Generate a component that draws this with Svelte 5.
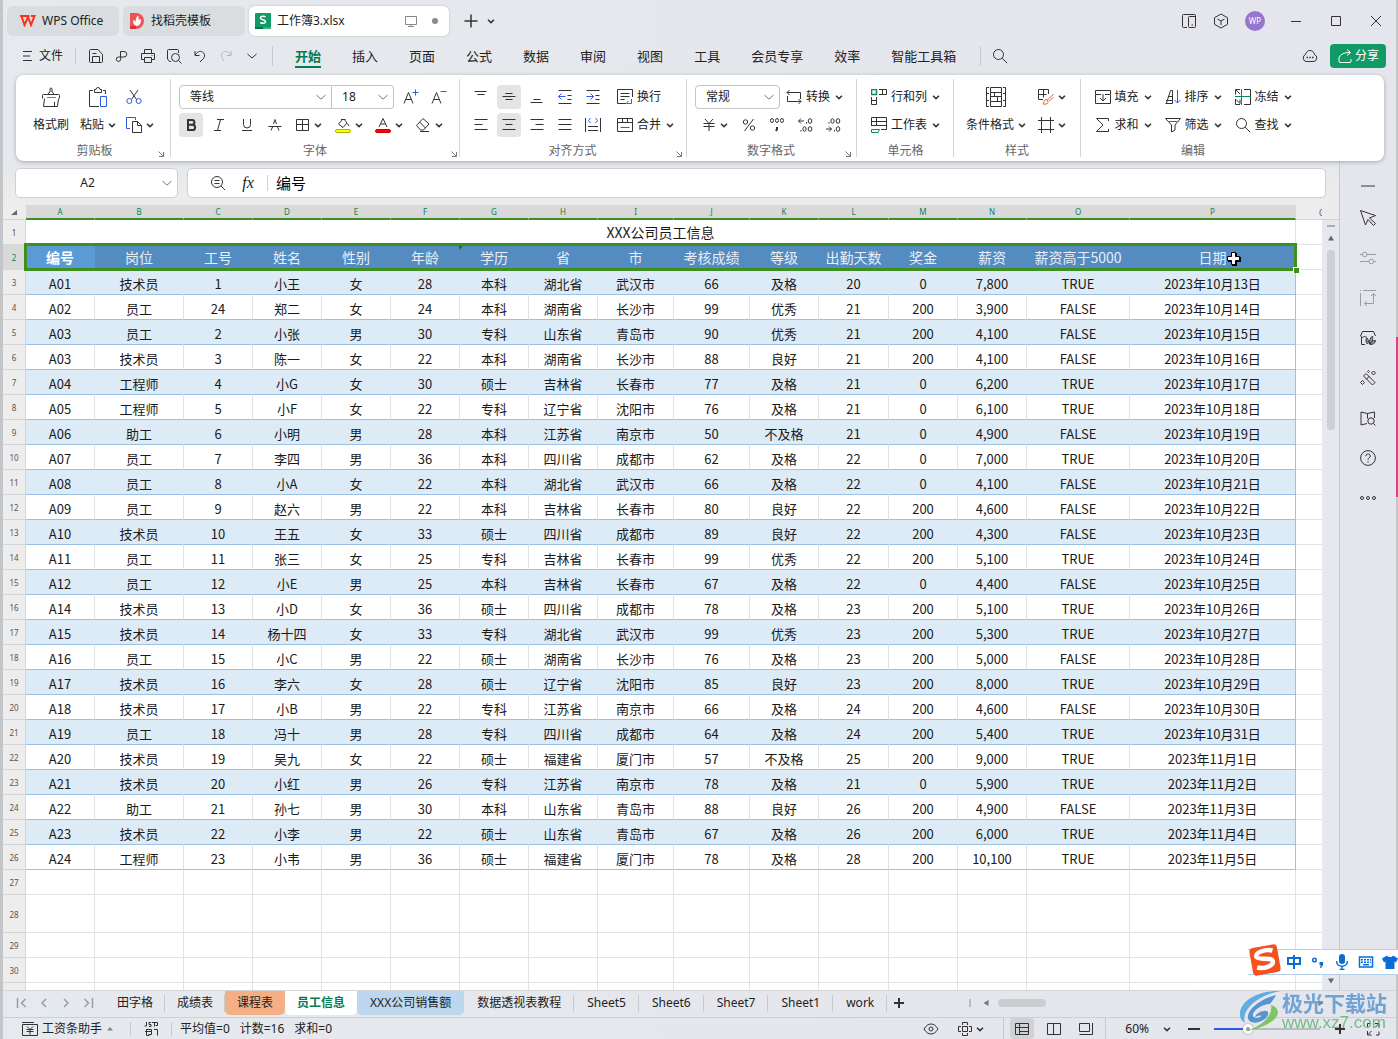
<script>
  const icons = {
    chev: [8, '<path d="M1 2.800 4 5.600 7 2.800" stroke-width="1.500"/>'],
    chevWide: [12, '<path d="M1.500 4 6 8.200 10.500 4" stroke="#777"/>'],
    menu: [12, '<path d="M2 1.500h9M2 6h7M2 10.500h9"/>'],
    save: [16, '<path d="M1.500 2.500v11a1 1 0 0 0 1 1h11a1 1 0 0 0 1-1V6.500l-4.500-5H2.500a1 1 0 0 0-1 1zM4.500 14v-5.500h7V14M4.500 5.500h4"/>'],
    link: [14, '<path d="M5.500 8V2.500h3.500a2.600 2.600 0 0 1 0 5.500H3.500a2.200 2.200 0 1 0 2.200 2.300V8"/>'],
    print: [16, '<path d="M4.500 5V1.500h7V5M4 11.500H1.500v-6h13v6H12M4.500 9.500h7v5h-7zM11.500 7.500h1"/>'],
    preview: [16, '<path d="M5 13.500H3.500L1.500 11V2.500a1 1 0 0 1 1-1h9a1 1 0 0 1 1 1V5"/><circle cx="9.500" cy="9.500" r="4"/><path d="m12.500 12.500 3 3"/>'],
    undo: [14, '<path d="M2 2v4.500h4.500M2.200 6C4 3 7 1.500 9.500 3s2.500 4.500 1 6.500L7 13"/>'],
    redo: [14, '<path d="M12 2v4.500H7.500M11.800 6C10 3 7 1.500 4.500 3S2 7.500 3.500 9.500L5 12" stroke="#b4b8bd"/>'],
    more: [12, '<path d="M1.500 4 6 8l4.500-4"/>'],
    search: [16, '<circle cx="6.500" cy="6.500" r="5"/><path d="m10.200 10.200 5 5"/>'],
    cloud: [16, '<path d="M4 13.500a3.700 3.700 0 0 1-.5-7C4 4 5.800 2.500 8 2.500s4 1.500 4.500 4a3.700 3.700 0 0 1-.5 7z"/><path d="M4.500 9.500H6M7.300 9.500h1.500M10 9.500h1.500" stroke-width="1.600"/>'],
    share: [16, '<path d="M2 9v4.500a1 1 0 0 0 1 1h10a1 1 0 0 0 1-1V11M2.500 9C4 6 7 4.500 13 4.500M10 1.500l3.500 3-3.500 3" stroke="#fff"/>'],
    split: [16, '<path d="M6 14.500H2.500a1 1 0 0 1-1-1v-11a1 1 0 0 1 1-1h11a1 1 0 0 1 1 1v11a1 1 0 0 1-1 1h-5a1 1 0 0 1-1-1v-9a1 1 0 0 1 1-1H14M10.500 12h1.500"/>'],
    cube: [16, '<path d="m8 1 6.500 3.700v6.600L8 15l-6.500-3.700V4.700zM4.500 6 8 8l3.500-2M8 8v4"/>'],
    min: [12, '<path d="M1 6.500h10"/>'],
    max: [12, '<path d="M1.500 1.500h9v9h-9z"/>'],
    close: [12, '<path d="m1 1 10 10M11 1 1 11"/>'],
    plus: [14, '<path d="M7 .500v13M.500 7h13" stroke-width="1.500"/>'],
    screen: [14, '<path d="M1.500 2.500h11v8h-11zM4 12.500h6M7 10.500v2" stroke="#888"/>'],
    brush: [20, '<path d="M7.500 7.500V6L9 5V2a1 1 0 0 1 2 0v3l1.500 1V7.500M1.500 11.500v-3a1 1 0 0 1 1-1h15a1 1 0 0 1 1 1v3M3.500 11.500l-1 8h14l1-8M13.500 15v4"/><path d="M6 10.500h9" stroke="#d8622a"/>'],
    paste: [20, '<path d="M5 3.500H1.500v16H11M15 3.500h2.500V7"/><path d="M6.500 5.500v-3H8a2 2 0 0 1 4 0h1.500v3z"/><path d="M12.500 9.500h6v10h-6z" stroke="#2c5be0"/>'],
    cut: [16, '<path d="m4 1 6.500 9.500M12 1 5.500 10.500"/><circle cx="3.300" cy="12" r="2.500" stroke="#2c5be0"/><circle cx="12.700" cy="12" r="2.500" stroke="#2c5be0"/>'],
    copy: [16, '<path d="M4 11.500H.500v-11h9V3" stroke="#2c5be0"/><path d="M6.500 4.500h5l4 4v7h-9zM11.500 4.500v4h4"/>'],
    bold: [14, '<path d="M4 2h4a2.300 2.300 0 0 1 0 4.800H4zM4 6.800h4.500a2.500 2.500 0 0 1 0 5.200H4z" stroke-width="2"/>'],
    italic: [14, '<path d="M5 1.500h7M2 12.500h7M8.500 1.500l-3 11"/>'],
    under: [14, '<path d="M3.500 1v5.500a3.500 3.500 0 0 0 7 0V1M2 12.500h10"/>'],
    strike: [14, '<path d="M3 12.500 4.500 9M5.500 6 7 1.500 8.500 6M9.500 9l1.500 3.500M.500 8.500h13"/>'],
    border: [14, '<path d="M.500 1.500h12v11h-12zM6.500 1.500v11M.500 6.500h12"/>'],
    fill: [16, '<path d="M6 2.500h4.500M8 2 3.500 7 8 10.500l4-4.500L9 2M12.500 6.500 14 9"/><rect x=".500" y="12.500" width="15" height="3" rx="1.500" fill="#ff0" stroke="#b5b500"/>'],
    color: [16, '<path d="M4 10 8 1.500 12 10M5.500 7h5"/><rect x=".500" y="12.500" width="15" height="3" rx="1.500" fill="#f00" stroke="#c00"/>'],
    eraser: [16, '<path d="m1.500 8.500 6.500-7 6 5.500-5.500 6H5.500zM4.500 5l6 6M5 14.500h9"/>'],
    grow: [18, '<path d="m2 15.500 4.500-11 4.500 11M3.500 11.500h6"/><path d="M13.500 1.500v6M10.500 4.500h6" stroke="#2c5be0"/>'],
    shrink: [18, '<path d="m2 15.500 4.500-11 4.500 11M3.500 11.500h6"/><path d="M10.500 3.500h6" stroke="#2c5be0"/>'],
    vtop: [14, '<path d="M.500 1.500h12M3.500 4.500h7"/>'],
    vmid: [14, '<path d="M3.500 3.500h7M.500 6.500h13M3.500 9.500h7"/>'],
    vbot: [14, '<path d="M3.500 9.500h7M.500 12.500h12"/>'],
    outdent: [14, '<path d="M.500.500h13M.500 13.500h13M9.500 5.500h4M9.500 9.500h4"/><path d="M7.500 6.500H.500M3.500 3.500l-3 3 3 3" stroke="#2c5be0"/>'],
    indent: [14, '<path d="M.500.500h13M.500 13.500h13M9.500 5.500h4M9.500 9.500h4"/><path d="M.500 6.500h7M4.500 3.500l3 3-3 3" stroke="#2c5be0"/>'],
    wrap: [16, '<path d="M9 14.500H.500v-14h15V8M3.500 4.500h9M3.500 7.500h9M3.500 10.500h4"/><path d="M14.500 10v4.500H9.500M11.500 12l-2.500 2.500" stroke="#0a8a5c"/>'],
    left: [14, '<path d="M.500 1.500h13M.500 6.500h8M.500 11.500h13"/>'],
    center: [14, '<path d="M.500 1.500h13M3.500 6.500h7M.500 11.500h13"/>'],
    right: [14, '<path d="M.500 1.500h13M5.500 6.500h8M.500 11.500h13"/>'],
    justify: [14, '<path d="M.500 1.500h13M.500 6.500h13M.500 11.500h13"/>'],
    spread: [16, '<path d="M.500 1v14M15.500 1v14M3 9.500h10M3 13.500h10"/><path d="M5.500 1 3.500 3.500l2 2.500M10.500 1l2 2.500-2 2.500" stroke="#2c5be0"/>'],
    merge: [16, '<path d="M.500 1.500h15v13h-15zM.500 5.500h15M5.500 1.500v4M10.500 1.500v4"/><path d="M3.500 10.500h9" stroke="#0a8a5c"/>'],
    convert: [16, '<path d="M3.500 1 1 3.500 3.500 6M1 3.500h13.500V10M1.500 7v5.500H15M12.500 10l2.500 2.500-2.500 2.500"/>'],
    yen: [14, '<path d="M3 1l4 4.500L11 1M1.500 5.500h11M1.500 8.500h11M7 5.500V13"/>'],
    percent: [14, '<path d="M11.500 1 2.500 13"/><circle cx="3.500" cy="4" r="2.200"/><circle cx="10.500" cy="10" r="2.200"/>'],
    comma: [16, '<ellipse cx="3" cy="3.500" rx="1.500" ry="2"/><ellipse cx="8" cy="3.500" rx="1.500" ry="2"/><ellipse cx="13" cy="3.500" rx="1.500" ry="2"/><path d="M8 10v2L7 14" stroke-width="2"/>'],
    addDec: [16, '<path d="M7 4H1.500M4 1.500 1.500 4 4 6.500M9.500 5v1.500M4 13v1.500"/><ellipse cx="13" cy="4" rx="1.800" ry="2.300"/><ellipse cx="7.500" cy="12" rx="1.600" ry="2.300"/><ellipse cx="13" cy="12" rx="1.800" ry="2.300"/>'],
    subDec: [16, '<path d="M1 12h5.500M4 9.500 6.500 12 4 14.500M9.500 13v1.500M4 5v1.500"/><ellipse cx="13" cy="12" rx="1.800" ry="2.300"/><ellipse cx="7.500" cy="4" rx="1.600" ry="2.300"/><ellipse cx="13" cy="4" rx="1.800" ry="2.300"/>'],
    rowcol: [16, '<path d="M.500.500h5v5h-5z" stroke="#0a8a5c" stroke-width="1.500"/><path d="M8 .500h7.500v5H8M11.500.500v5M.500 8v7.500h5V8M.500 11.500h5"/>'],
    sheet: [16, '<path d="M.500 9V.500h15v12H10M.500 4.500h15M5.500.500v8M.500 8.500h15"/><path d="M.500 12.500h8l-1.500 3H.500z" stroke="#0a8a5c"/>'],
    cond: [20, '<path d="M3 .500H.500v19H3M17 .500h2.500v19H17M.500 6.500H3M.500 13.500H3M17 6.500h2.500M17 13.500h2.500M4.500 .500h11v5h-11zM4.500 5.500v9M15.500 5.500v9M8.500 5.500v4M4.500 9.500h11M11.500 9.500v5M4.500 14.500h11v5h-11z"/>'],
    style: [16, '<path d="M5 10.500H.500v-10h10V5M.500 5.500h8M5.500.500v8"/><path d="m15.500 5-6 6M15.500 8l-4 4M8 10.500a2.500 2.500 0 0 1 2 3c-.5 1.500-3 2-5 1.500 1.500-1.500.5-4 3-4.500z" stroke="#d8622a"/>'],
    frame: [16, '<path d="M3.500 0v16M12.500 0v16M0 3.500h16M0 12.500h16"/>'],
    filldown: [16, '<path d="M6 5.500H.500v-4h15v4H10M.500 6v8.500h15V6M8 5v7M5 9l3 3 3-3"/>'],
    sort: [16, '<path d="M1 11.500h6M.500 14.500h7V1.500H5.500L1.500 14M3 7.500h4"/><path d="M12.500 1v13M9.500 11l3 3 3-3" stroke="#2c5be0"/>'],
    freeze: [16, '<path d="M5 .500H.500v5M.500 10v5.500H5M9 .500h6.500v15H9M1 1l4 4M1 10.500l4 4M5 10.500v4"/><path d="M6.500 0v16M0 7.500h16" stroke="#0a8a5c"/>'],
    sum: [16, '<path d="M13.500 4V1.500h-12L8 8l-6.500 6.500h12V12"/>'],
    filter: [16, '<path d="M.500 1.500h15L10 8v5l-3.500 2V8z"/><path d="M4 4.500h8" stroke="#0a8a5c"/>'],
    launch: [6, '<path d="M.500.500 5 5M5.500 1v4.500H1" stroke="#777"/>'],
    zoomout: [16, '<circle cx="7" cy="7" r="5.500"/><path d="m11 11 4 4M4.500 5.500h5M4.500 8.500h5"/>'],
    bar: [14, '<path d="M0 7h14" stroke="#8a8d92" stroke-width="2"/>'],
    arrow: [18, '<path d="m1.500 1.500 15 5-6 2.500 6 5.500-2 2-5.500-6L6.500 16z"/>'],
    sliders: [16, '<path d="M0 4.500h2.500M7 4.500h9M0 11.500h9M13.500 11.500H16" stroke="#9a9da2"/><circle cx="4.700" cy="4.500" r="2.300" stroke="#9a9da2"/><circle cx="11.300" cy="11.500" r="2.300" stroke="#9a9da2"/>'],
    swap: [16, '<path d="M.500 3v13M3 .500h13M0 .500h1M4.500 13.500h9v-10M11 6l2.500-2.500L16 6M7 11l-2.500 2.500L7 16" stroke="#9a9da2"/>'],
    gallery: [16, '<path d="M5 14.500H1.500V7M.500 6l2-4.500h11l2 4.500M.500 6c1.500 2 3.500 1.500 4 0 .5 1 1.500 1.500 2.500 1"/><path d="M7.500 14c-2-2-2-4-.5-6 1.500 2 2 4 .5 6zM9.500 14c-.5-4 1-6 3-8 .5 4 0 6-3 8zM10 14.500c0-2 2.500-4 5.500-4 0 3-3 4-5.500 4z" fill="#9aa0a6"/>'],
    wand: [16, '<path d="m6 3.500 9 9-2.500 2.500-9-9zM6 9.500 9.500 6M.500 12.500l2-2 2 2-2 2zM11.500 3l2-2 2 2-2 2zM7.500 1.500l1-1 1 1-1 1z"/>'],
    book: [16, '<path d="M7 13.500 1 15V2l6.500 1.500v5M7.500 3.500 14.500 2v6"/><circle cx="11" cy="11" r="3.200"/><path d="m13.500 13.500 2 2"/>'],
    help: [16, '<circle cx="8" cy="8" r="7.400"/><path d="M5.800 6.200c0-3 4.500-3 4.500-.2C10.300 7.800 8 7.700 8 9.800M8 11.200v1.300"/>'],
    dots: [16, '<circle cx="2" cy="8" r="1.500"/><circle cx="8" cy="8" r="1.500"/><circle cx="14" cy="8" r="1.500"/>'],
    first: [12, '<path d="M1.500 1v10M9.500 2 5.500 6l4 4" stroke="#9a9da2" stroke-width="1.500"/>'],
    prev: [12, '<path d="M8 2 4 6l4 4" stroke="#9a9da2" stroke-width="1.500"/>'],
    next: [12, '<path d="m4 2 4 4-4 4" stroke="#9a9da2" stroke-width="1.500"/>'],
    last: [12, '<path d="M10.500 1v10M2.500 2l4 4-4 4" stroke="#9a9da2" stroke-width="1.500"/>'],
    add: [12, '<path d="M6 1v10M1 6h10" stroke-width="2"/>'],
    salary: [16, '<path d="M0 1.500h12M.500 3.500h15v11h-15zM5 5.500l3 3 3-3M4.500 8.500h7M4.500 10.500h7M8 8.500v5"/>'],
    up: [8, '<path d="M1 5.500 4 2l3 3.500z" fill="#7c8296" stroke="none"/>'],
    flow: [16, '<path d="M3.500 1v4H1.500M8 1.500H6v2h2v2H6M9 1.500h5.500M11.500 1.500v4M14.500 1.500v3h-2M3 8.500h5.500v5H5.500M2 10.500h6.500M3.500 8v6.500h3M11 8.500h3.500v6"/>'],
    eye: [16, '<path d="M1 8c2-3.500 4.500-5 7-5s5 1.500 7 5c-2 3.500-4.500 5-7 5s-5-1.500-7-5z"/><circle cx="8" cy="8" r="2"/>'],
    cross: [14, '<path d="M4.500 4.500h5v5h-5zM4.500 3V.500h5V3M4.500 11v2.500h5V11M3 4.500H.500v5H3M11 4.500h2.500v5H11"/>'],
    viewGrid: [14, '<path d="M.500 1.500h13v11h-13zM.500 5.500h13M4.500 1.500v11M4.500 9.500h9"/>'],
    viewPage: [14, '<path d="M.500 1.500h13v11h-13zM6.500 1.500v11"/>'],
    viewBreak: [14, '<path d="M.500 1.500h10v8h-10zM13.500 1v11.500H.500M4.500 12.500h3"/>'],
    minus: [12, '<path d="M0 6h12" stroke-width="2"/>'],
    full: [14, '<path d="M9 1.500h4v4M12.500 2 9 5.500M1.500 9v4h4M2 12.500 5.500 9M1.500 5V1.500H4M13 9.500V13h-3"/>'],
  }

  const menus = ['开始', '插入', '页面', '公式', '数据', '审阅', '视图', '工具', '会员专享', '效率', '智能工具箱']
  const sideTools = [
    ['bar', '收起'], ['arrow', '选择'], ['sliders', '属性'], ['swap', '切换'], ['gallery', '素材'],
    ['wand', '美化'], ['book', '查阅'], ['help', '帮助'], ['dots', '更多'],
  ]

  const cols = [
    ['A', 69], ['B', 89], ['C', 69], ['D', 69], ['E', 69], ['F', 69], ['G', 69], ['H', 69], ['I', 76],
    ['J', 76], ['K', 69], ['L', 70], ['M', 69], ['N', 69], ['O', 103], ['P', 166], ['Q', 53],
  ]
  const dataWidth = cols.slice(0, 16).reduce((sum, c) => sum + c[1], 0)

  const heads = ['编号', '岗位', '工号', '姓名', '性别', '年龄', '学历', '省', '市', '考核成绩', '等级', '出勤天数', '奖金', '薪资', '薪资高于5000', '日期']
  const rows = `A01 技术员 1 小王 女 28 本科 湖北省 武汉市 66 及格 20 0 7,800 TRUE 2023年10月13日
A02 员工 24 郑二 女 24 本科 湖南省 长沙市 99 优秀 21 200 3,900 FALSE 2023年10月14日
A03 员工 2 小张 男 30 专科 山东省 青岛市 90 优秀 21 200 4,100 FALSE 2023年10月15日
A03 技术员 3 陈一 女 22 本科 湖南省 长沙市 88 良好 21 200 4,100 FALSE 2023年10月16日
A04 工程师 4 小G 女 30 硕士 吉林省 长春市 77 及格 21 0 6,200 TRUE 2023年10月17日
A05 工程师 5 小F 女 22 专科 辽宁省 沈阳市 76 及格 21 0 6,100 TRUE 2023年10月18日
A06 助工 6 小明 男 28 本科 江苏省 南京市 50 不及格 21 0 4,900 FALSE 2023年10月19日
A07 员工 7 李四 男 36 本科 四川省 成都市 62 及格 22 0 7,000 TRUE 2023年10月20日
A08 员工 8 小A 女 22 本科 湖北省 武汉市 66 及格 22 0 4,100 FALSE 2023年10月21日
A09 员工 9 赵六 男 22 本科 吉林省 长春市 80 良好 22 200 4,600 FALSE 2023年10月22日
A10 技术员 10 王五 女 33 硕士 四川省 成都市 89 良好 22 200 4,300 FALSE 2023年10月23日
A11 员工 11 张三 女 25 专科 吉林省 长春市 99 优秀 22 200 5,100 TRUE 2023年10月24日
A12 员工 12 小E 男 25 本科 吉林省 长春市 67 及格 22 0 4,400 FALSE 2023年10月25日
A14 技术员 13 小D 女 36 硕士 四川省 成都市 78 及格 23 200 5,100 TRUE 2023年10月26日
A15 技术员 14 杨十四 女 33 专科 湖北省 武汉市 99 优秀 23 200 5,300 TRUE 2023年10月27日
A16 员工 15 小C 男 22 硕士 湖南省 长沙市 76 及格 23 200 5,000 FALSE 2023年10月28日
A17 技术员 16 李六 女 28 硕士 辽宁省 沈阳市 85 良好 23 200 8,000 TRUE 2023年10月29日
A18 技术员 17 小B 男 22 专科 江苏省 南京市 66 及格 24 200 4,600 FALSE 2023年10月30日
A19 员工 18 冯十 男 28 专科 四川省 成都市 64 及格 24 200 5,400 TRUE 2023年10月31日
A20 技术员 19 吴九 女 22 硕士 福建省 厦门市 57 不及格 25 200 9,000 TRUE 2023年11月1日
A21 技术员 20 小红 男 26 专科 江苏省 南京市 78 及格 21 0 5,900 TRUE 2023年11月2日
A22 助工 21 孙七 男 30 本科 山东省 青岛市 88 良好 26 200 4,900 FALSE 2023年11月3日
A23 技术员 22 小李 男 22 硕士 山东省 青岛市 67 及格 26 200 6,000 TRUE 2023年11月4日
A24 工程师 23 小韦 男 36 硕士 福建省 厦门市 78 及格 28 200 10,100 TRUE 2023年11月5日`.split('\n').map((line) => line.split(' '))

  const sheets = [
    ['田字格', ''], ['成绩表', ''], ['课程表', 'orange'], ['员工信息', 'current'], ['XXX公司销售额', 'blue'],
    ['数据透视表教程', 'wide'], ['Sheet5', 'wide'], ['Sheet6', 'wide'], ['Sheet7', 'wide'], ['Sheet1', 'wide'], ['work', 'wide'],
  ]

  let formula = '编号'
  let zoom = 30
</script>

{#snippet icon(name)}
  <svg class="ico" width={icons[name][0]} height={icons[name][0]} viewBox="0 0 {icons[name][0]} {icons[name][0]}" aria-hidden="true">{@html icons[name][1]}</svg>
{/snippet}

{#snippet tool(name, label, on = false)}
  <button class="tool" class:on aria-label={label}>{@render icon(name)}</button>
{/snippet}

{#snippet drop(name, label)}
  <button class="drop" aria-label={label}>{@render icon(name)}{@render icon('chev')}</button>
{/snippet}

{#snippet item(name, label, more = true)}
  <button class="item">{@render icon(name)}<span>{label}</span>{#if more}{@render icon('chev')}{/if}</button>
{/snippet}

{#snippet foot(label, launch = false)}
  <div class="foot">
    <span>{label}</span>
    {#if launch}<button class="launch" aria-label="{label}设置">{@render icon('launch')}</button>{/if}
  </div>
{/snippet}

<div class="window">
  <header class="title">
    <button class="doc home">
      <svg width="16" height="12" viewBox="0 0 16 12" aria-hidden="true"><path d="M0 1h9.500M1.500 1l3 9L8 2l3 8 3.500-9H11" fill="none" stroke="#f5341f" stroke-width="2" /></svg>
      WPS Office
    </button>
    <button class="doc tmpl">
      <svg width="16" height="16" viewBox="0 0 16 16" aria-hidden="true"><path d="M1 0h6a8 8 0 0 1 0 16H1z" fill="#f0525a" /><path d="M1 13h6v3H1z" fill="#d8323c" /><path d="M8 13C4 12 4 9 4.500 7c1 .5 1.800 1 2 2C6.500 6 7.500 4 9 2.500c1 2 .8 3.500.5 5 .5-.8 1.500-1.200 2.500-1.500 0 4-1 6.500-4 7z" fill="#fff" /></svg>
      找稻壳模板
    </button>
    <button class="doc active">
      <svg width="16" height="16" viewBox="0 0 16 16" aria-hidden="true"><rect width="16" height="16" rx="1" fill="#109b66" /><path d="M0 14h8v2H0z" fill="#067046" /><path d="M8 14h8v2H8z" fill="#35b183" /><path d="M10.500 4C9 2.800 5.500 2.800 5.500 5c0 2.300 5 1.200 5 3.600 0 2-3.500 2.200-5.200.7" fill="none" stroke="#fff" stroke-width="1.600" /></svg>
      <span class="name">工作簿3.xlsx</span>
      {@render icon('screen')}
      <i class="dirty"></i>
    </button>
    <button class="tool" aria-label="新建">{@render icon('plus')}</button>
    <button class="slim" aria-label="标签列表">{@render icon('chev')}</button>
    <div class="controls">
      <button class="ctl" aria-label="分屏">{@render icon('split')}</button>
      <button class="ctl" aria-label="应用">{@render icon('cube')}</button>
      <button class="avatar">WP</button>
      <button class="win" aria-label="最小化">{@render icon('min')}</button>
      <button class="win" aria-label="最大化">{@render icon('max')}</button>
      <button class="win" aria-label="关闭">{@render icon('close')}</button>
    </div>
  </header>

  <nav class="menu">
    <button class="file">{@render icon('menu')}文件</button>
    <div class="quick">
      {#each [['save', '保存'], ['link', '输出'], ['print', '打印'], ['preview', '打印预览'], ['undo', '撤销'], ['redo', '恢复'], ['more', '更多']] as q}
        <button aria-label={q[1]}>{@render icon(q[0])}</button>
      {/each}
    </div>
    <div class="tabs">
      {#each menus as m, i}
        <button class:cur={i == 0}>{m}</button>
      {/each}
    </div>
    <button class="find" aria-label="搜索">{@render icon('search')}</button>
    <button class="cloud" aria-label="云同步">{@render icon('cloud')}</button>
    <button class="share">{@render icon('share')}分享</button>
  </nav>

  <section class="ribbon">
    <div class="group clip">
      <div class="line">
        <button class="big">{@render icon('brush')}<span>格式刷</span></button>
        <button class="big">{@render icon('paste')}<span>粘贴{@render icon('chev')}</span></button>
        <div class="stack">
          {@render tool('cut', '剪切')}
          {@render drop('copy', '复制')}
        </div>
      </div>
      {@render foot('剪贴板', true)}
    </div>

    <div class="group font">
      <div class="line">
        <div class="combo family"><select aria-label="字体"><option>等线</option></select>{@render icon('chevWide')}</div>
        <div class="combo size"><select aria-label="字号"><option>18</option></select>{@render icon('chevWide')}</div>
        {@render tool('grow', '增大字号')}
        {@render tool('shrink', '减小字号')}
      </div>
      <div class="line">
        {@render tool('bold', '加粗', true)}
        {@render tool('italic', '倾斜')}
        {@render tool('under', '下划线')}
        {@render tool('strike', '删除线')}
        {@render drop('border', '边框')}
        {@render drop('fill', '填充颜色')}
        {@render drop('color', '字体颜色')}
        {@render drop('eraser', '清除')}
      </div>
      {@render foot('字体', true)}
    </div>

    <div class="group align">
      <div class="line">
        {@render tool('vtop', '顶端对齐')}
        {@render tool('vmid', '垂直居中', true)}
        {@render tool('vbot', '底端对齐')}
        {@render tool('outdent', '减少缩进')}
        {@render tool('indent', '增加缩进')}
        {@render item('wrap', '换行', false)}
      </div>
      <div class="line">
        {@render tool('left', '左对齐')}
        {@render tool('center', '水平居中', true)}
        {@render tool('right', '右对齐')}
        {@render tool('justify', '两端对齐')}
        {@render tool('spread', '分散对齐')}
        {@render item('merge', '合并')}
      </div>
      {@render foot('对齐方式', true)}
    </div>

    <div class="group number">
      <div class="line">
        <div class="combo format"><select aria-label="数字格式"><option>常规</option></select>{@render icon('chevWide')}</div>
        {@render item('convert', '转换')}
      </div>
      <div class="line">
        {@render drop('yen', '货币')}
        {@render tool('percent', '百分比')}
        {@render tool('comma', '千位分隔')}
        {@render tool('addDec', '增加小数位')}
        {@render tool('subDec', '减少小数位')}
      </div>
      {@render foot('数字格式', true)}
    </div>

    <div class="group cell">
      <div class="line">{@render item('rowcol', '行和列')}</div>
      <div class="line">{@render item('sheet', '工作表')}</div>
      {@render foot('单元格')}
    </div>

    <div class="group style">
      <div class="line">
        <button class="big">{@render icon('cond')}<span>条件格式{@render icon('chev')}</span></button>
        <div class="stack">
          {@render drop('style', '单元格样式')}
          {@render drop('frame', '表格样式')}
        </div>
      </div>
      {@render foot('样式')}
    </div>

    <div class="group edit">
      <div class="line">
        {@render item('filldown', '填充')}
        {@render item('sort', '排序')}
        {@render item('freeze', '冻结')}
      </div>
      <div class="line">
        {@render item('sum', '求和')}
        {@render item('filter', '筛选')}
        {@render item('search', '查找')}
      </div>
      {@render foot('编辑')}
    </div>
  </section>

  <div class="work">
    <main>
      <div class="bar">
        <div class="combo cellname"><select aria-label="名称框"><option>A2</option></select>{@render icon('chevWide')}</div>
        <div class="fx">
          <button aria-label="缩小">{@render icon('zoomout')}</button>
          <button class="fn">fx</button>
          <input aria-label="编辑栏" bind:value={formula} />
        </div>
      </div>

      <div class="pane">
        <div class="scroll">
          <div class="canvas">
            <table>
              <colgroup>
                <col class="rowhead" />
                {#each cols as c}<col style="width: {c[1]}px" />{/each}
              </colgroup>
              <thead>
                <tr>
                  <th class="corner"><svg width="6" height="6" viewBox="0 0 6 6" aria-hidden="true"><path d="M6 0v5H0z" fill="#666" /></svg></th>
                  {#each cols as c, i}<th class:sel={i < 16}>{c[0]}</th>{/each}
                </tr>
              </thead>
              <tbody>
                <tr class="caption"><th>1</th><td colspan="16">XXX公司员工信息</td><td></td></tr>
                <tr class="heads">
                  <th class="sel">2</th>
                  {#each heads as h}<td>{h}</td>{/each}
                  <td class="out"></td>
                </tr>
                {#each rows as r, i}
                  <tr class="data" class:band={i % 2 == 0}>
                    <th>{i + 3}</th>
                    {#each r as v}<td>{v}</td>{/each}
                    <td class="out"></td>
                  </tr>
                {/each}
                {#each ['27', '28', '29', '30', ''] as n}
                  <tr class:tall={n == '28'}>
                    <th>{n}</th>
                    {#each cols as c}<td></td>{/each}
                  </tr>
                {/each}
              </tbody>
            </table>
            <div class="selection" style="width: {dataWidth + 3}px">
              <svg class="cursor" width="16" height="16" viewBox="0 0 16 16" aria-hidden="true"><path d="M6 2h5v4h4v5h-4v4H6v-4H2V6h4z" fill="#000" /><path d="M5.500 1.500h4v4h4v4h-4v4h-4v-4h-4v-4h4z" fill="#fff" stroke="#000" /></svg>
            </div>
          </div>
        </div>
        <div class="vbar">
          <span class="grip"></span>
          <svg width="8" height="6" viewBox="0 0 8 6" aria-hidden="true"><path d="M1 5.500 4 .500l3 5z" fill="#666" /></svg>
          <span class="thumb"></span>
          <svg class="down" width="8" height="6" viewBox="0 0 8 6" aria-hidden="true"><path d="M1 .500 4 5.500l3-5z" fill="#666" /></svg>
        </div>
      </div>
    </main>

    <aside>
      {#each sideTools as s}
        <button aria-label={s[1]}>{@render icon(s[0])}</button>
      {/each}
    </aside>
  </div>

  <div class="sheets">
    <div class="nav">
      {#each [['first', '第一张'], ['prev', '上一张'], ['next', '下一张'], ['last', '最后一张']] as n}
        <button aria-label={n[1]}>{@render icon(n[0])}</button>
      {/each}
    </div>
    {#each sheets as s}
      <button class="sheet {s[1]}">{s[0]}</button>
    {/each}
    <button class="tool" aria-label="新建工作表">{@render icon('add')}</button>
    <div class="hbar">
      <i></i>
      <svg width="6" height="8" viewBox="0 0 6 8" aria-hidden="true"><path d="M5.500 1 .500 4l5 3z" fill="#777" /></svg>
      <span></span>
      <svg class="end" width="6" height="8" viewBox="0 0 6 8" aria-hidden="true"><path d="M.500 1l5 3-5 3z" fill="#777" /></svg>
    </div>
  </div>

  <footer class="status">
    <button class="salary">{@render icon('salary')}工资条助手{@render icon('up')}</button>
    <button class="flow" aria-label="流程">{@render icon('flow')}</button>
    <div class="stats"><span>平均值=0</span><span>计数=16</span><span>求和=0</span></div>
    <div class="views">
      <button class="tool" aria-label="护眼模式">{@render icon('eye')}</button>
      {@render drop('cross', '阅读模式')}
      <div class="modes">
        {@render tool('viewGrid', '普通视图', true)}
        {@render tool('viewPage', '分页预览')}
        {@render tool('viewBreak', '页面布局')}
      </div>
      <button class="rate">60%{@render icon('chev')}</button>
      <button class="step" aria-label="缩小">{@render icon('minus')}</button>
      <input type="range" min="0" max="100" bind:value={zoom} aria-label="缩放" />
      <button class="step" aria-label="放大">{@render icon('add')}</button>
      <button class="tool" aria-label="全屏">{@render icon('full')}</button>
    </div>
  </footer>
</div>

<i class="edge"></i>

<div class="ime">
  <svg class="sogou" width="34" height="34" viewBox="0 0 34 34" aria-hidden="true"><g transform="rotate(-10 17 17)"><rect x="3" y="3" width="28" height="28" rx="4" fill="#f4511e" /><path d="M26 9C19 6 8 8 9 12.500c1 4 15 2 15.500 7C25 24 15 26 8 23" fill="none" stroke="#fff" stroke-width="4.500" /></g></svg>
  <svg width="16" height="16" viewBox="0 0 16 16" aria-hidden="true"><path d="M2 4h12v6H2zM8 1v14" fill="none" stroke="#0a6cd6" stroke-width="2" /></svg>
  <svg width="16" height="16" viewBox="0 0 16 16" aria-hidden="true"><circle cx="4.500" cy="6" r="1.800" fill="none" stroke="#0a6cd6" stroke-width="1.500" /><path d="M9.500 8h3.500v3l-2 3h-1l.8-3H9.500z" fill="#0a6cd6" /></svg>
  <svg width="16" height="16" viewBox="0 0 16 16" aria-hidden="true"><rect x="5" y="0" width="6" height="10" rx="3" fill="#0a6cd6" /><path d="M2.500 7c.5 7 10.500 7 11 0M8 12v4M5.500 15.500h5" fill="none" stroke="#0a6cd6" stroke-width="1.500" /></svg>
  <svg width="16" height="16" viewBox="0 0 16 16" aria-hidden="true"><rect x="1.500" y="3" width="13" height="10" fill="none" stroke="#0a6cd6" stroke-width="1.500" /><path d="M3 5.800h10M3 8.200h10" stroke="#0a6cd6" stroke-width="1.500" stroke-dasharray="2 1" /><path d="M5 10.700h6" stroke="#0a6cd6" stroke-width="1.500" /></svg>
  <svg width="16" height="16" viewBox="0 0 16 16" aria-hidden="true"><path d="M5 1.500c1 2 5 2 6 0l5 3-2 4-1.500-1V15h-9V7.500L2 8.500l-2-4z" fill="#0a6cd6" /></svg>
</div>

<div class="mark">
  <svg width="44" height="42" viewBox="0 0 44 42" aria-hidden="true">
    <path d="M43 1C20 0 1 11 2 25c0 4 2 6 5 8C3 22 16 6 43 1z" fill="#4aa3df" />
    <path d="M38 5C23 9 9 19 10 28c1 6 10 6 17 1 5-4 4-9-1-8-4 0-8 3-9 6 3-1 6-2 6-1 0 2-7 3-8 0-1-5 9-12 17-12 3-4 5-7 6-9z" fill="#3f86c9" />
    <path d="M33 15c13 4 9 19-24 26 16-6 26-15 24-26z" fill="#6cc04a" />
  </svg>
  <div><b>极光下载站</b><span>www.xz7.com</span></div>
</div>

<style>
:global(body) {
  margin: 0;
  background: #c4c5c8;
}

.window {
  --ui: "Noto Sans", "Noto Sans CJK SC", sans-serif;
  display: flex;
  flex-direction: column;
  height: 100vh;
  margin: 0 2px 0 3px;
  background: linear-gradient(90deg, #e5eaee, #e5e7ec 50%, #e5e6ed);
  font: 12px/16px var(--ui);
  color: #222;
  overflow: hidden;
}

button {
  display: flex;
  align-items: center;
  justify-content: center;
  padding: 0;
  border: 0;
  background: none;
  color: inherit;
  font: inherit;
  white-space: nowrap;
  flex: none;
}

.ico {
  flex: none;
  display: block;
  fill: none;
  stroke: #333;
}

/* title bar */
.title {
  display: flex;
  align-items: center;
  height: 41px;
  padding-left: 4px;
}
.doc {
  height: 30px;
  margin-right: 4px;
  padding: 0 13px;
  gap: 6px;
  justify-content: flex-start;
  border-radius: 6px;
  background: #d9dde0;
}
.home {
  width: 112px;
}
.tmpl {
  width: 122px;
  padding: 0 6px;
}
.active {
  width: 200px;
  padding: 0 10px 0 6px;
  background: #fff;
  box-shadow: 0 0 2px #b0b4b8;
}
.name {
  flex: 1;
  text-align: left;
}
.dirty {
  width: 6px;
  height: 6px;
  margin: 0 1px 0 8px;
  border-radius: 50%;
  background: #8a8a8a;
}
.title > .tool {
  margin-left: 6px;
}
.slim {
  width: 12px;
}
.controls {
  display: flex;
  align-items: center;
  margin-left: auto;
}
.ctl {
  width: 32px;
  height: 28px;
}
.avatar {
  width: 20px;
  height: 20px;
  margin: 0 11px 0 8px;
  border-radius: 50%;
  background: #9575cd;
  color: #fff;
  font-size: 8px;
}
.win {
  width: 40px;
  height: 28px;
}

/* menu */
.menu {
  display: flex;
  align-items: center;
  height: 29px;
  margin-bottom: 5px;
  padding: 0 10px 0 18px;
}
.file {
  gap: 6px;
  padding-right: 12px;
  border-right: 1px solid #c6cacf;
}
.quick {
  display: flex;
  padding: 0 7px;
  border-right: 1px solid #c6cacf;
}
.quick button {
  width: 26px;
  height: 20px;
}
.tabs {
  display: flex;
  gap: 31px;
  padding: 0 24px 0 22px;
  border-right: 1px solid #c6cacf;
  font-size: 13px;
}
.tabs button {
  height: 20px;
}
.tabs .cur {
  color: #067a50;
  font-weight: bold;
  box-shadow: 0 2px 0 #067a50;
}
.find {
  width: 37px;
}
.cloud {
  margin: 0 12px 0 auto;
}
.share {
  width: 56px;
  height: 24px;
  gap: 2px;
  border-radius: 4px;
  background: #109b66;
  color: #fff;
}

/* ribbon */
.ribbon {
  display: flex;
  flex: none;
  position: relative;
  z-index: 1;
  margin: 0 12px 0 13px;
  padding: 4px 0;
  border-radius: 8px;
  background: #fff;
  box-shadow: 0 1px 4px #a4a9b0;
}
.group {
  display: flex;
  flex-direction: column;
  padding: 4px 6px 0;
  border-right: 1px solid #d4d4d4;
}
.group:last-child {
  border: 0;
}
.line {
  display: flex;
}
.clip {
  padding: 4px 10px 0 13px;
}
.align {
  padding: 4px 8px 0 7px;
}
.number {
  padding: 4px 9px 0 8px;
}
.cell {
  padding: 4px 9px 0 10px;
}
.style {
  padding: 4px 8px 0;
}
.edit {
  padding: 4px 6px 0 7px;
}
.foot {
  display: flex;
  justify-content: center;
  position: relative;
  padding-top: 4px;
  height: 14px;
  color: #666;
}
.launch {
  position: absolute;
  right: -4px;
  bottom: 0;
}
.tool {
  width: 24px;
  height: 24px;
  margin: 2px;
  border-radius: 4px;
}
.tool.on {
  background: #e4e4e4;
}
.drop {
  width: 40px;
  height: 28px;
  gap: 4px;
}
.item {
  height: 28px;
  gap: 4px;
  padding: 0 4px;
}
.item span {
  margin-right: 1px;
}
.align .item {
  padding-left: 10px;
}
.edit .item {
  width: 70px;
}
.big {
  flex-direction: column;
  height: 56px;
  padding: 4px 4px 0;
  box-sizing: border-box;
  justify-content: space-between;
}
.big span {
  display: flex;
  align-items: center;
  gap: 4px;
  height: 28px;
}
.clip .big + .big {
  margin-left: 3px;
}
.style .stack {
  margin-left: 2px;
}
.combo {
  display: flex;
  align-items: center;
  position: relative;
  height: 24px;
  box-sizing: border-box;
  border: 1px solid #c4c4c4;
  border-radius: 4px;
  background: #fff;
}
.combo select {
  appearance: none;
  width: 100%;
  height: 100%;
  padding: 0 10px;
  border: 0;
  background: none;
  color: #222;
  font: inherit;
}
.combo .ico {
  position: absolute;
  right: 4px;
  pointer-events: none;
}
.combo :global(svg) {
  position: absolute;
  right: 4px;
  pointer-events: none;
}
.family {
  width: 153px;
  margin: 2px 0 2px 2px;
  border-radius: 4px 0 0 4px;
}
.size {
  width: 62px;
  margin: 2px 3px 2px 0;
  border-left: 0;
  border-radius: 0 4px 4px 0;
}
.format {
  width: 85px;
  margin: 2px 2px 2px 0;
}

/* formula bar */
.work {
  display: flex;
  flex: 1;
  min-height: 0;
}
main {
  display: flex;
  flex-direction: column;
  flex: 1;
  min-width: 0;
  background: linear-gradient(#e5e7eb, #ececec 30px);
}
.bar {
  display: flex;
  gap: 9px;
  padding: 7px 13px 7px 12px;
}
.cellname {
  width: 163px;
  height: 30px;
  border-color: #ccd0d4;
  border-radius: 5px;
}
.cellname select {
  padding-right: 28px;
  text-align-last: center;
}
.fx {
  display: flex;
  align-items: center;
  flex: 1;
  height: 30px;
  box-sizing: border-box;
  padding-left: 22px;
  border: 1px solid #ccd0d4;
  border-radius: 5px;
  background: #fff;
}
.fx .fn {
  width: 14px;
  margin: 0 12px 0 15px;
  font: italic 16px/16px "Liberation Serif", serif;
}
.fx input {
  flex: 1;
  height: 16px;
  padding: 0 0 0 8px;
  border: 0;
  border-left: 1px solid #d0d0d0;
  outline: 0;
  font: 15px/16px var(--ui);
}

/* cells */
.pane {
  display: flex;
  flex: 1;
  min-height: 0;
}
.scroll {
  flex: 1;
  overflow: hidden;
}
.canvas {
  position: relative;
}
table {
  table-layout: fixed;
  width: 0;
  border-collapse: separate;
  border-spacing: 0;
  background: #fff;
}
.rowhead {
  width: 23px;
}
th,
td {
  box-sizing: border-box;
  height: 25px;
  padding: 0;
  border: solid #e2e2e2;
  border-width: 0 1px 1px 0;
  text-align: center;
  white-space: nowrap;
  overflow: hidden;
  font: 13px/16px "Noto Sans CJK SC", sans-serif;
  color: #1a1a1a;
}
th {
  background: #ededed;
  border-color: #d6d6d6;
  font: 8px/12px var(--ui);
  color: #555;
}
tbody th {
  padding-top: 2px;
}
thead th {
  height: 15px;
  border-right-color: #ededed;
  line-height: 13px;
}
thead .sel {
  background: #d9d9d9;
  border-color: #d9d9d9;
  border-bottom: 2px solid #3f8f20;
  color: #0b8058;
}
tbody .sel {
  background: #d9d9d9;
  color: #0b8058;
}
.corner svg {
  display: block;
  margin: 2px auto 0;
}
.caption td {
  font-size: 14px;
}
.heads td {
  background: #548cc2;
  border-color: #548cc2;
  color: #e9eef5;
  font-size: 14px;
}
.heads th + td {
  background: #5b9bd5;
  border-color: #5b9bd5;
  color: #fff;
  font-weight: bold;
}
.data td {
  padding-top: 3px;
  border-bottom-color: #9bc2e6;
}
.band td {
  background: #ddebf7;
  border-right-color: #ddebf7;
}
.data td:nth-last-child(2) {
  border-right-color: #9bc2e6;
}
tr td.out {
  background: #fff;
  border-color: #e2e2e2;
}
.tall th,
.tall td {
  height: 38px;
}
.selection {
  position: absolute;
  left: 21px;
  top: 38px;
  height: 28px;
  box-sizing: border-box;
  border: 3px solid #3f8f20;
}
.selection::before {
  content: '';
  position: absolute;
  left: 432px;
  top: 0;
  border: 2px solid;
  border-color: #0a7a1e transparent transparent #0a7a1e;
}
.selection::after {
  content: '';
  position: absolute;
  right: -5px;
  bottom: -5px;
  width: 5px;
  height: 5px;
  border: solid #fff;
  border-width: 1px 0 0 1px;
  background: #3f8f20;
}
.cursor {
  position: absolute;
  right: 52px;
  top: 5px;
}
.vbar {
  display: flex;
  flex-direction: column;
  align-items: center;
  width: 17px;
  margin-top: 14px;
  background: #e5e8ec;
  border-top: 1px solid #d0d0d0;
}
.grip {
  width: 8px;
  height: 2px;
  margin: 5px 0 8px;
  background: #aaadb1;
}
.thumb {
  width: 8px;
  height: 180px;
  margin-top: 9px;
  border-radius: 4px;
  background: #cdcfd2;
}
.down {
  margin: auto 0 6px;
}

aside {
  display: flex;
  flex-direction: column;
  align-items: center;
  width: 56px;
  padding-top: 5px;
  border-left: 1px solid #c6cacf;
}
aside button {
  width: 32px;
  height: 40px;
}
aside button:first-child {
  height: 40px;
  margin-bottom: -8px;
}

/* sheet tabs */
.sheets {
  display: flex;
  align-items: flex-start;
  height: 26px;
  border-top: 1px solid #d2d5d8;
  border-bottom: 1px solid #cdd0d4;
}
.nav {
  display: flex;
  width: 102px;
  padding-left: 8px;
  box-sizing: border-box;
}
.nav button {
  width: 22px;
  height: 24px;
}
.sheet {
  position: relative;
  height: 24px;
  padding: 0 12px;
}
.sheet:not(.orange, .current, .blue)::after {
  content: '';
  position: absolute;
  right: 0;
  top: 4px;
  height: 17px;
  border-right: 1px solid #c6cacf;
}
.orange,
.current,
.blue {
  border-radius: 0 0 5px 5px;
}
.orange {
  background: #f4b084;
}
.current {
  background: #fff;
  color: #067a50;
  font-weight: bold;
}
.blue {
  background: #bdd7ee;
}
.blue,
.wide {
  padding: 0 13px;
}
.sheets .tool {
  margin: 0;
}
.hbar {
  display: flex;
  align-items: center;
  flex: 1;
  height: 24px;
  max-width: 355px;
  margin: 0 72px 0 auto;
}
.hbar i {
  width: 2px;
  height: 8px;
  margin-right: 12px;
  background: #b9bcc0;
}
.hbar span {
  width: 48px;
  height: 8px;
  margin-left: 9px;
  border-radius: 4px;
  background: #cbcdd0;
}
.end {
  margin-left: auto;
}

/* status bar */
.status {
  display: flex;
  align-items: center;
  height: 21px;
  padding: 0 9px 0 19px;
}
.salary {
  gap: 4px;
  padding-right: 16px;
}
.flow {
  width: 42px;
  height: 14px;
  border: solid #c6cacf;
  border-width: 0 1px;
}
.stats {
  display: flex;
  gap: 10px;
  padding-left: 8px;
}
.views {
  display: flex;
  align-items: center;
  margin-left: auto;
}
.views .drop {
  margin-left: 6px;
}
.modes {
  display: flex;
  gap: 4px;
  margin-left: 12px;
  padding: 0 5px 0 4px;
  border: solid #c6cacf;
  border-width: 0 1px;
}
.modes .tool {
  height: 21px;
  margin: 0 2px;
}
.modes .tool.on {
  background: #cfd1d4;
}
.rate {
  gap: 14px;
  margin: 0 10px 0 19px;
}
.step {
  width: 26px;
  height: 21px;
}
.status input {
  appearance: none;
  width: 106px;
  height: 2px;
  margin: 0 7px;
  background: linear-gradient(90deg, #2c5be0 30%, #b9bcc2 30%);
}
.status input::-webkit-slider-thumb {
  appearance: none;
  width: 10px;
  height: 10px;
  border: 3px solid #fff;
  border-radius: 50%;
  box-sizing: border-box;
  background: #999;
  box-shadow: 0 0 2px #888;
}
.status .step + .tool {
  margin-left: 8px;
}

/* things floating over the window */
.edge {
  position: fixed;
  right: 0;
  top: 337px;
  width: 2px;
  height: 160px;
  background: #d6457f;
}
.ime {
  position: fixed;
  z-index: 2;
  right: 0;
  bottom: 64px;
  display: flex;
  align-items: center;
  gap: 8px;
  height: 24px;
  padding-left: 38px;
  border: solid #b5cfe8;
  border-width: 1px 0;
  background: linear-gradient(90deg, transparent 28px, #fff 28px);
}
.sogou {
  position: absolute;
  left: 0;
  top: -7px;
}
.mark {
  position: fixed;
  z-index: 2;
  right: 11px;
  bottom: 7px;
  display: flex;
  opacity: .85;
  pointer-events: none;
}
.mark div {
  display: flex;
  flex-direction: column;
}
.mark b {
  font: bold 21px/24px "Noto Sans CJK SC", sans-serif;
  color: #5b97d0;
}
.mark span {
  font: 17px/18px "Liberation Sans", sans-serif;
  color: #5cb874;
}
</style>
